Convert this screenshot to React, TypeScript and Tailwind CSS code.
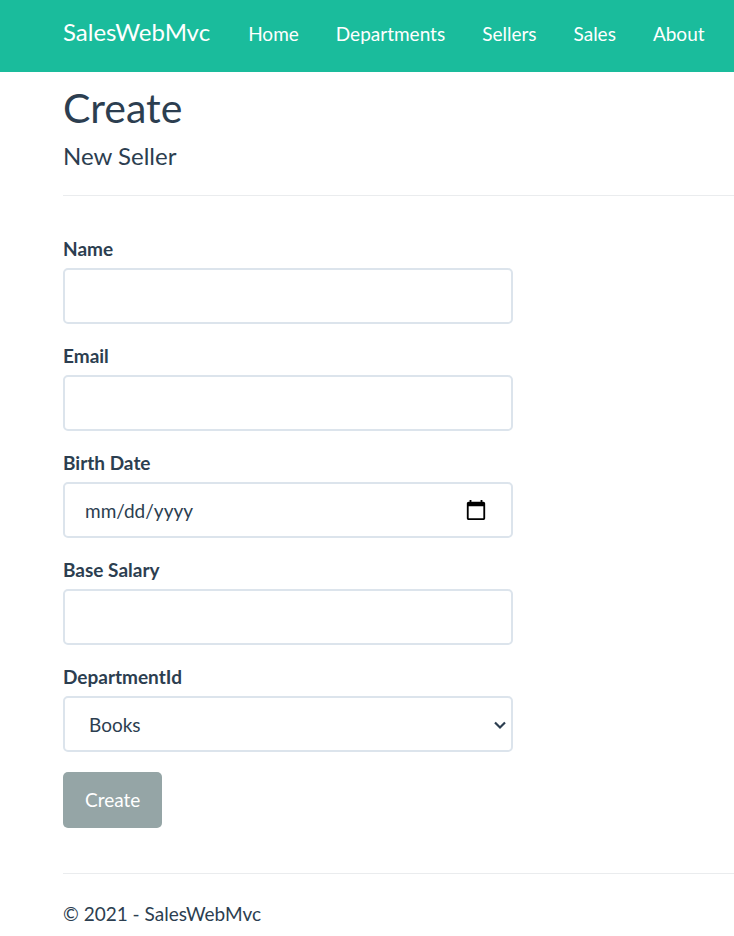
import type { InputHTMLAttributes } from "react";

const links = ["Home", "Departments", "Sellers", "Sales", "About"];

const labelStyle = "mb-[5px] block text-[19px] leading-7 font-bold";

const control =
  "block h-14 w-full rounded-[5px] border-2 border-[#dce4ec] bg-white text-[19px] text-[#2c3e50] outline-none";

type FieldProps = InputHTMLAttributes<HTMLInputElement> & { id: string; label: string };

function Field({ id, label, ...rest }: FieldProps) {
  return (
    <div className="mb-[18px]">
      <label htmlFor={id} className={labelStyle}>
        {label}
      </label>
      <input id={id} className={`${control} px-5`} {...rest} />
    </div>
  );
}

export default function App() {
  return (
    <div className="overflow-hidden bg-white font-[Lato,sans-serif] text-[19px] leading-7 text-[#2c3e50]">
      <nav className="flex h-18 items-center bg-[#1abc9c] pb-1 pl-[63px] text-white">
        <a href="#" className="mr-[38px] pb-1 text-2xl">
          SalesWebMvc
        </a>
        <ul className="flex gap-[37px]">
          {links.map((link) => (
            <li key={link}>
              <a href="#">{link}</a>
            </li>
          ))}
        </ul>
      </nav>
      <div className="pl-[63px]">
        <main>
          <h1 className="pt-3 text-[41px] leading-12">Create</h1>
          <h2 className="mt-2 text-2xl leading-8">New Seller</h2>
          <hr className="mt-[23px] mb-[39px] border-[#eaecee]" />
          <form className="w-[450px] max-w-full" onSubmit={(e) => e.preventDefault()}>
            <Field id="name" label="Name" />
            <Field id="email" label="Email" type="email" />
            <div className="mb-[18px]">
              <label htmlFor="birth" className={labelStyle}>
                Birth Date
              </label>
              <div className="relative">
                <input id="birth" placeholder="mm/dd/yyyy" className={`${control} px-5 placeholder:text-[#2c3e50]`} />
                <button type="button" aria-label="Choose date" className="absolute top-[17px] right-[26px]">
                  <svg width="22" height="22" viewBox="0 0 24 24" fill="#000">
                    <path d="M20 3h-1V1h-2v2H7V1H5v2H4c-1.1 0-2 .9-2 2v16c0 1.1.9 2 2 2h16c1.1 0 2-.9 2-2V5c0-1.1-.9-2-2-2zm0 18H4V8h16v13z" />
                  </svg>
                </button>
              </div>
            </div>
            <Field id="salary" label="Base Salary" />
            <div className="mb-5">
              <label htmlFor="department" className={labelStyle}>
                DepartmentId
              </label>
              <div className="relative">
                <select id="department" className={`${control} appearance-none px-6 pt-0.5`}>
                  <option>Books</option>
                </select>
                <svg className="pointer-events-none absolute top-[25px] right-[7px]" width="12" height="9" viewBox="0 0 12 9" fill="none" stroke="#2c3e50" strokeWidth="2.2">
                  <path d="M1 1.5l5 5 5-5" />
                </svg>
              </div>
            </div>
            <button type="submit" className="h-14 rounded-[5px] bg-[#95a5a6] px-[22px] text-white">
              Create
            </button>
          </form>
        </main>
        <hr className="mt-[45px] mb-[26px] border-[#eaecee]" />
        <footer>
          <p>&copy; 2021 - SalesWebMvc</p>
        </footer>
      </div>
    </div>
  );
}
